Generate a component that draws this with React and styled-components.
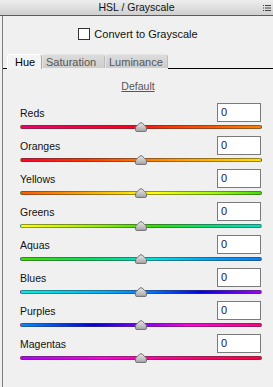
import React from 'react';
import styled, { createGlobalStyle } from 'styled-components';

const GlobalStyle = createGlobalStyle`
  html, body { margin: 0; padding: 0; background: #f0f0f0; }
  body { font-family: "Liberation Sans", Arial, sans-serif; }
`;

const Panel = styled.div`
  width: 273px;
  height: 387px;
  display: flex;
  flex-direction: column;
  background: #f0f0f0;
  overflow: hidden;
`;

const TitleBar = styled.div`
  height: 15px;
  border-bottom: 1px solid #5c5c5c;
  background: linear-gradient(#eeeeee, #cfcfcf);
  display: grid;
  grid-template-columns: 1fr auto 1fr;
  align-items: center;
  font-size: 10.5px;
  color: #111;
`;

const Title = styled.div`
  grid-column: 2;
  line-height: 15px;
`;

const MenuIcon = styled.svg`
  justify-self: end;
  margin-right: 2px;
  display: block;
`;

const Body = styled.div`
  flex: 1;
  margin-left: 2px;
  border-left: 1px solid #7c7c7c;
  display: flex;
  flex-direction: column;
`;

const CheckRow = styled.label`
  display: flex;
  align-items: center;
  justify-content: center;
  gap: 4px;
  margin-top: 12px;
  font-size: 11px;
  color: #111;
  height: 12px;
`;

const Box = styled.span`
  width: 10px;
  height: 10px;
  border: 1px solid #333;
  background: #fff;
`;

const TabBar = styled.div`
  display: flex;
  align-items: flex-end;
  height: 15px;
  margin-top: 14px;
`;

const Line = styled.div`
  width: ${p => p.$w || 0}px;
  flex: ${p => (p.$grow ? 1 : 'none')};
  border-bottom: 1px solid #000;
`;

const Tab = styled.div`
  box-sizing: border-box;
  width: ${p => p.$w}px;
  height: ${p => (p.$active ? 15 : 14)}px;
  padding-left: ${p => p.$pad}px;
  margin-bottom: ${p => (p.$active ? 0 : 1)}px;
  font-size: 11px;
  line-height: 14px;
  color: ${p => (p.$active ? '#000' : '#555')};
  background: ${p => (p.$active ? '#f4f4f4' : 'linear-gradient(#dcdcdc, #cdcdcd)')};
  border: 1px solid ${p => (p.$active ? '#fff' : '#e6e6e6')};
  border-bottom: none;
  border-right-color: ${p => (p.$active ? '#aaa' : '#bcbcbc')};
  border-radius: 3px 3px 0 0;
`;

const DefaultLink = styled.div`
  margin-top: 11px;
  text-align: center;
  font-size: 10.5px;
  line-height: 13px;
  color: #555;
  text-decoration: underline;
`;

const List = styled.div`
  margin-top: 10px;
  padding: 0 11px 0 17px;
  display: flex;
  flex-direction: column;
`;

const Row = styled.div`
  height: 33px;
  display: flex;
  flex-direction: column;
`;

const Header = styled.div`
  height: 19px;
  display: flex;
  align-items: center;
  justify-content: space-between;
`;

const Label = styled.span`
  font-size: 10.5px;
  color: #111;
`;

const ValueBox = styled.div`
  box-sizing: border-box;
  width: 44px;
  height: 19px;
  margin-right: 1px;
  border: 1px solid #7a7a7a;
  background: #fff;
  padding-left: 3px;
  font-size: 11px;
  line-height: 17px;
  color: #14144a;
`;

const SliderArea = styled.div`
  position: relative;
  height: 10px;
`;

const Track = styled.div`
  box-sizing: border-box;
  margin-top: 3px;
  height: 4px;
  border-radius: 2px;
  border: 1px solid rgba(60, 60, 60, 0.55);
  background: ${p => p.$grad};
`;

const Thumb = styled.svg`
  position: absolute;
  top: 0;
  left: 50%;
  transform: translateX(-50%);
  display: block;
`;

const rows = [
  ['Reds', 'linear-gradient(90deg, #f0006a, #ff0020 45%, #ff3000 60%, #ff8000)'],
  ['Oranges', 'linear-gradient(90deg, #ff0030, #ff3000 25%, #ff9000 60%, #ffe000)'],
  ['Yellows', 'linear-gradient(90deg, #ff5a00, #ffb000 30%, #ffff00 55%, #a0ff00 80%, #40e000)'],
  ['Greens', 'linear-gradient(90deg, #ffff00, #a0f000 30%, #30e000 55%, #00e080 80%, #00e0c0)'],
  ['Aquas', 'linear-gradient(90deg, #40e000, #00e060 30%, #00e0e0 55%, #00a0ff 80%, #0080ff)'],
  ['Blues', 'linear-gradient(90deg, #00f0e0, #00b0ff 35%, #0070ff 55%, #0000f0 75%, #a000ff)'],
  ['Purples', 'linear-gradient(90deg, #0090ff, #0000e0 30%, #8000ff 50%, #ff00e0 70%, #ff0080)'],
  ['Magentas', 'linear-gradient(90deg, #b000ff, #ff00e0 35%, #ff00a0 55%, #ff0060 80%, #ff0040)'],
];

function SliderThumb() {
  return (
    <Thumb width="12" height="10" viewBox="0 0 12 10">
      <defs>
        <linearGradient id="tg" x1="0" y1="0" x2="0" y2="1">
          <stop offset="0" stopColor="#e8e8e8" />
          <stop offset="1" stopColor="#a6a6a6" />
        </linearGradient>
      </defs>
      <path
        d="M6 0.6 C7 0.6 11.4 4.6 11.4 5.6 L11.4 8.4 Q11.4 9.4 10.4 9.4 L1.6 9.4 Q0.6 9.4 0.6 8.4 L0.6 5.6 C0.6 4.6 5 0.6 6 0.6 Z"
        fill="url(#tg)"
        stroke="#6e6e6e"
        strokeWidth="1"
      />
    </Thumb>
  );
}

export default function App() {
  return (
    <>
      <GlobalStyle />
      <Panel>
        <TitleBar>
          <Title>HSL / Grayscale</Title>
          <MenuIcon width="8" height="6" viewBox="0 0 8 6">
            <rect x="0" y="0" width="1" height="1" fill="#444" />
            <rect x="2" y="0" width="6" height="1" fill="#444" />
            <rect x="0" y="2.5" width="1" height="1" fill="#444" />
            <rect x="2" y="2.5" width="6" height="1" fill="#444" />
            <rect x="0" y="5" width="1" height="1" fill="#444" />
            <rect x="2" y="5" width="6" height="1" fill="#444" />
          </MenuIcon>
        </TitleBar>
        <Body>
          <CheckRow>
            <Box />
            <span>Convert to Grayscale</span>
          </CheckRow>
          <TabBar>
            <Line $w={4} />
            <Tab $active $w={35} $pad={7}>Hue</Tab>
            <Tab $w={63} $pad={3}>Saturation</Tab>
            <Tab $w={63} $pad={3}>Luminance</Tab>
            <Line $grow />
          </TabBar>
          <DefaultLink>Default</DefaultLink>
          <List>
            {rows.map(([name, grad]) => (
              <Row key={name}>
                <Header>
                  <Label>{name}</Label>
                  <ValueBox>0</ValueBox>
                </Header>
                <SliderArea>
                  <Track $grad={grad} />
                  <SliderThumb />
                </SliderArea>
              </Row>
            ))}
          </List>
        </Body>
      </Panel>
    </>
  );
}
